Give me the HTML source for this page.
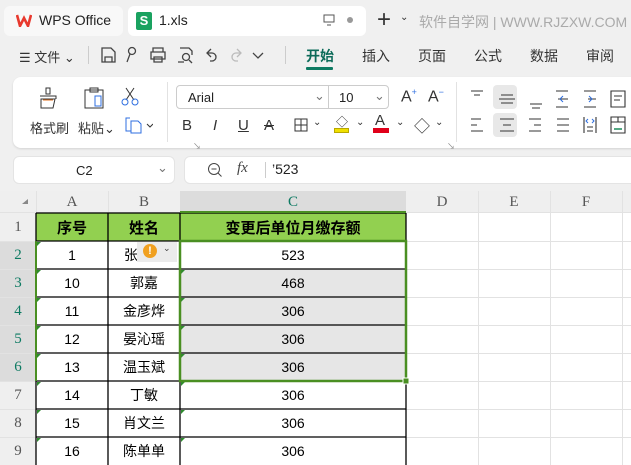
<!DOCTYPE html>
<html><head><meta charset="utf-8"><style>
*{margin:0;padding:0;box-sizing:border-box}
body{width:631px;height:465px;overflow:hidden;background:#f0f0f0;font-family:"Liberation Sans","Noto Sans CJK SC",sans-serif;position:relative;color:#222}
.a{position:absolute}
.t{font-size:13px;color:#333;white-space:nowrap}
.cell{position:absolute;display:flex;align-items:center;justify-content:center;font-size:14px;color:#000}
.rh{position:absolute;left:0;width:36px;display:flex;align-items:center;justify-content:center;font-family:"Liberation Serif",serif;font-size:15px;color:#555}
.ch{position:absolute;top:191px;height:22px;display:flex;align-items:center;justify-content:center;font-family:"Liberation Serif",serif;font-size:15px;color:#555}
</style></head><body>
<!-- tabs -->
<div class="a" style="left:4px;top:6px;width:119px;height:30px;background:#f8f8f8;border-radius:6px"></div>
<svg class="a" style="left:16px;top:14px" width="16" height="13" viewBox="0 0 16 13"><path d="M1 1 L4 12 L8 4 L12 12 L15 1" stroke="#e8392e" stroke-width="2.6" fill="none"/></svg>
<div class="a t" style="left:39px;top:12px;font-size:14px;color:#222">WPS Office</div>
<div class="a" style="left:128px;top:6px;width:238px;height:30px;background:#fff;border-radius:6px"></div>
<div class="a" style="left:136px;top:12px;width:16px;height:18px;background:#1aa260;border-radius:2px;color:#fff;font-size:13px;font-weight:bold;text-align:center;line-height:18px">S</div>
<div class="a t" style="left:159px;top:12px;font-size:14px;color:#222">1.xls</div>
<svg class="a" style="left:323px;top:14px" width="12" height="12"><rect x="1" y="1" width="10" height="7" stroke="#555" fill="none"/><path d="M4 11h4" stroke="#555"/></svg>
<div class="a" style="left:347px;top:17px;width:6px;height:6px;border-radius:3px;background:#999"></div>
<div class="a" style="left:377px;top:6px;font-size:24px;color:#333;font-weight:300">+</div>
<div class="a t" style="left:400px;top:12px;font-size:10px">⌄</div>
<div class="a t" style="left:419px;top:12px;font-size:14px;color:#aaa">软件自学网 | WWW.RJZXW.COM</div>
<!-- menu -->
<div class="a t" style="left:19px;top:47px;font-size:13px">☰ 文件 ⌄</div>
<div class="a" style="left:88px;top:46px;width:1px;height:18px;background:#ccc"></div>
<svg class="a" style="left:100px;top:45px" width="175" height="20" fill="none" stroke="#444" stroke-width="1.3">
<path d="M2 3h9l4 4v10H2zM5 17v-5h7v5"/>
<circle cx="32" cy="6" r="3.5"/><path d="M30 9l-3 8"/>
<path d="M53 7V3h10v4M51 7h14v7H51zM54 12h8v5h-8z"/>
<path d="M80 3h9l3 3v4M78 17h6"/><circle cx="86" cy="12" r="3.5"/><path d="M89 15l3 3"/>
<path d="M111 4l-4 4 4 4M107 8h5a4 4 0 0 1 0 8h-2"/>
<path d="M137 4l4 4-4 4M141 8h-5a4 4 0 0 0 0 8h2" stroke="#bbb"/>
<path d="M153 8l5 5 5-5"/>
</svg>
<div class="a" style="left:285px;top:46px;width:1px;height:18px;background:#ccc"></div>
<div class="a t" style="left:306px;top:46px;font-size:14px;color:#0d6b5a;font-weight:bold">开始</div>
<div class="a" style="left:306px;top:67px;width:27px;height:3px;background:#0d7a62;border-radius:1px"></div>
<div class="a t" style="left:362px;top:46px;font-size:14px">插入</div>
<div class="a t" style="left:418px;top:46px;font-size:14px">页面</div>
<div class="a t" style="left:474px;top:46px;font-size:14px">公式</div>
<div class="a t" style="left:530px;top:46px;font-size:14px">数据</div>
<div class="a t" style="left:586px;top:46px;font-size:14px">审阅</div>
<!-- ribbon -->
<div class="a" style="left:13px;top:77px;width:640px;height:71px;background:#fff;border-radius:8px;box-shadow:0 1px 2px rgba(0,0,0,.12)"></div>
<svg class="a" style="left:36px;top:86px" width="24" height="24" viewBox="0 0 24 24"><path d="M10 2h4v6h-4z M4 10h16v3 M5 13h14l-2 9H5z" stroke="#333" fill="none"/><path d="M7 14h10" stroke="#e07020"/></svg>
<svg class="a" style="left:82px;top:86px" width="24" height="24" viewBox="0 0 24 24"><path d="M3 4h18v18H3z M8 2h8v4H8z" stroke="#333" fill="none"/><rect x="13" y="10" width="6" height="10" stroke="#2f6fe0" fill="none"/></svg>
<svg class="a" style="left:121px;top:87px" width="18" height="20"><path d="M5 1l8 12M13 1L5 13" stroke="#333" fill="none"/><circle cx="4" cy="15" r="3" stroke="#2f6fe0" fill="none"/><circle cx="14" cy="15" r="3" stroke="#2f6fe0" fill="none"/></svg>
<div class="a t" style="left:30px;top:118px">格式刷</div>
<div class="a t" style="left:78px;top:118px">粘贴⌄</div>
<svg class="a" style="left:125px;top:116px" width="28" height="18"><path d="M5 2H1v13h5 M6 5h7l3 3v9H6z" stroke="#2f6fe0" fill="none"/><path d="M22 8l3 3 3-3" stroke="#333" fill="none"/></svg>
<div class="a" style="left:193px;top:141px;font-size:8px;color:#888">↘</div>
<div class="a" style="left:167px;top:82px;width:1px;height:60px;background:#e2e2e2"></div>
<div class="a" style="left:176px;top:85px;width:213px;height:24px;border:1px solid #ccc;border-radius:4px"></div>
<div class="a" style="left:328px;top:86px;width:1px;height:22px;background:#ccc"></div>
<div class="a t" style="left:188px;top:90px;font-size:13px;color:#222">Arial</div>
<div class="a t" style="left:314px;top:88px;color:#777">⌄</div>
<div class="a t" style="left:339px;top:90px;font-size:13px;color:#222">10</div>
<div class="a t" style="left:374px;top:88px;color:#777">⌄</div>
<div class="a t" style="left:401px;top:87px;font-size:16px">A<sup style="font-size:9px;color:#2f6fe0">+</sup></div>
<div class="a t" style="left:428px;top:87px;font-size:16px">A<sup style="font-size:9px;color:#2f6fe0">−</sup></div>
<div class="a t" style="left:182px;top:117px;font-size:15px">B</div>
<div class="a t" style="left:213px;top:117px;font-size:15px;font-style:italic">I</div>
<div class="a t" style="left:238px;top:117px;font-size:15px;text-decoration:underline">U</div>
<div class="a t" style="left:264px;top:117px;font-size:15px;text-decoration:line-through">A</div>
<svg class="a" style="left:294px;top:118px" width="14" height="14"><path d="M1 1h12v12H1zM7 1v12M1 7h12" stroke="#333" fill="none"/></svg>
<div class="a t" style="left:313px;top:117px;font-size:10px">⌄</div>
<div class="a" style="left:334px;top:128px;width:15px;height:5px;background:#f0e000;border:1px solid #b9a800"></div>
<div class="a t" style="left:336px;top:113px;font-size:12px">◇</div>
<div class="a t" style="left:356px;top:117px;font-size:10px">⌄</div>
<div class="a t" style="left:375px;top:112px;font-size:15px">A</div>
<div class="a" style="left:373px;top:128px;width:16px;height:5px;background:#e0001a"></div>
<div class="a t" style="left:396px;top:117px;font-size:10px">⌄</div>
<div class="a t" style="left:414px;top:113px;font-size:16px">◇</div>
<div class="a t" style="left:435px;top:117px;font-size:10px">⌄</div>
<div class="a" style="left:447px;top:141px;font-size:8px;color:#888">↘</div>
<div class="a" style="left:456px;top:82px;width:1px;height:60px;background:#e2e2e2"></div>
<div class="a" style="left:493px;top:85px;width:24px;height:24px;background:#e8e8e8;border-radius:4px"></div>
<div class="a" style="left:493px;top:113px;width:24px;height:24px;background:#e8e8e8;border-radius:4px"></div>
<svg class="a" style="left:468px;top:88px" width="163" height="48" fill="none">
<g stroke="#333" stroke-width="1.1"><path d="M3 3h12M6 7h6"/><path d="M33 7h12M31 11h16M33 15h12"/><path d="M62 16h12M64 20h8"/><path d="M88 3h12M90 11h10M88 19h12"/><path d="M116 3h12M120 11h8M116 19h12"/><path d="M143 3h14v16h-14zM146 8h8M146 12h6"/>
<path d="M3 31h10M3 37h6M3 43h12"/><path d="M32 31h14M35 37h8M32 43h14"/><path d="M61 31h12M66 37h7M61 43h12"/><path d="M89 31h12M89 37h12M89 43h12"/><path d="M116 29v16M128 29v16M119 39h6M119 43h6"/><path d="M143 29h14v16h-14zM143 34h14M150 29v5"/></g>
<g stroke="#2f6fe0"><path d="M92 11l3-3M92 11l3 3"/><path d="M124 11l-3-3M124 11l-3 3"/><path d="M120 31l-2 2 2 2M124 31l2 2-2 2"/></g>
<path d="M146 41h8" stroke="#1a8a5a" stroke-width="1.5"/>
</svg>
<!-- formula bar -->
<div class="a" style="left:13px;top:156px;width:162px;height:28px;background:#fff;border-radius:6px;border:1px solid #e4e4e4"></div>
<div class="a t" style="left:76px;top:163px;font-size:13px;color:#222">C2</div>
<div class="a t" style="left:157px;top:160px;color:#777">⌄</div>
<div class="a" style="left:184px;top:156px;width:460px;height:28px;background:#fff;border-radius:6px;border:1px solid #e4e4e4"></div>
<svg class="a" style="left:207px;top:162px" width="16" height="16"><circle cx="7" cy="7" r="5.5" stroke="#444" fill="none"/><path d="M4.5 7h5M11 11l3.5 3.5" stroke="#444"/></svg>
<div class="a" style="left:237px;top:160px;font-size:15px;font-style:italic;font-family:'Liberation Serif',serif;color:#444">fx</div>
<div class="a" style="left:265px;top:162px;width:1px;height:16px;background:#ccc"></div>
<div class="a t" style="left:272px;top:161px;font-size:14px;color:#222">’523</div>
<!-- grid background -->
<div class="a" style="left:0;top:191px;width:631px;height:22px;background:#efefef"></div>
<div class="a" style="left:180px;top:191px;width:226px;height:22px;background:#dcdcdc"></div>
<div class="a" style="left:0;top:213px;width:36px;height:252px;background:#efefef"></div>
<div class="a" style="left:0;top:241px;width:36px;height:140px;background:#dcdcdc"></div>
<div class="a" style="left:36px;top:213px;width:595px;height:252px;background:#fff"></div>
<svg class="a" style="left:0;top:191px" width="631" height="274">
<g stroke="#e2e2e2">
<path d="M478.5 0v274M550.5 0v274M622.5 0v274M108.5 0v22M36.5 0v22"/>
<path d="M406 50.5h225M406 78.5h225M406 106.5h225M406 134.5h225M406 162.5h225M406 190.5h225M406 218.5h225M406 246.5h225"/>
<path d="M0 50.5h36M0 78.5h36M0 106.5h36M0 134.5h36M0 162.5h36M0 190.5h36M0 218.5h36M0 246.5h36M0 21.5h631"/>
</g>
<path d="M22 13l6-5v5z" fill="#888"/>
</svg>
<div class="ch" style="left:36px;width:72px">A</div>
<div class="ch" style="left:108px;width:72px">B</div>
<div class="ch" style="left:180px;width:226px;color:#0d7a62">C</div>
<div class="ch" style="left:406px;width:72px">D</div>
<div class="ch" style="left:478px;width:72px">E</div>
<div class="ch" style="left:550px;width:72px">F</div>
<div class="rh" style="top:213px;height:28px">1</div>
<div class="rh" style="top:241px;height:28px;color:#0d7a62">2</div>
<div class="rh" style="top:269px;height:28px;color:#0d7a62">3</div>
<div class="rh" style="top:297px;height:28px;color:#0d7a62">4</div>
<div class="rh" style="top:325px;height:28px;color:#0d7a62">5</div>
<div class="rh" style="top:353px;height:28px;color:#0d7a62">6</div>
<div class="rh" style="top:381px;height:28px">7</div>
<div class="rh" style="top:409px;height:28px">8</div>
<div class="rh" style="top:437px;height:28px">9</div>
<!-- header row -->
<div class="a" style="left:36px;top:213px;width:370px;height:28px;background:#92d050"></div>
<div class="a" style="left:180px;top:269px;width:226px;height:112px;background:#e6e6e6"></div>
<svg class="a" style="left:0;top:191px" width="631" height="274">
<g stroke="#000" stroke-width="1.3">
<path d="M36 22h370M36 50h370M36 78h370M36 106h370M36 134h370M36 162h370M36 190h370M36 218h370M36 246h370"/>
<path d="M36 22v252M108 22v252M180 22v252M406 22v252"/>
</g>
</svg>
<div class="cell" style="left:36px;top:213px;width:72px;height:28px;font-weight:bold;font-size:15px">序号</div>
<div class="cell" style="left:108px;top:213px;width:72px;height:28px;font-weight:bold;font-size:15px">姓名</div>
<div class="cell" style="left:180px;top:213px;width:226px;height:28px;font-weight:bold;font-size:15px">变更后单位月缴存额</div>
<div class="cell" style="left:36px;top:241px;width:72px;height:28px">1</div><div class="cell" style="left:108px;top:241px;width:72px;height:28px;justify-content:flex-start;padding-left:16px">张总宇</div><div class="cell" style="left:180px;top:241px;width:226px;height:28px">523</div>
<div class="cell" style="left:36px;top:269px;width:72px;height:28px">10</div><div class="cell" style="left:108px;top:269px;width:72px;height:28px">郭嘉</div><div class="cell" style="left:180px;top:269px;width:226px;height:28px">468</div>
<div class="cell" style="left:36px;top:297px;width:72px;height:28px">11</div><div class="cell" style="left:108px;top:297px;width:72px;height:28px">金彦烨</div><div class="cell" style="left:180px;top:297px;width:226px;height:28px">306</div>
<div class="cell" style="left:36px;top:325px;width:72px;height:28px">12</div><div class="cell" style="left:108px;top:325px;width:72px;height:28px">晏沁瑶</div><div class="cell" style="left:180px;top:325px;width:226px;height:28px">306</div>
<div class="cell" style="left:36px;top:353px;width:72px;height:28px">13</div><div class="cell" style="left:108px;top:353px;width:72px;height:28px">温玉斌</div><div class="cell" style="left:180px;top:353px;width:226px;height:28px">306</div>
<div class="cell" style="left:36px;top:381px;width:72px;height:28px">14</div><div class="cell" style="left:108px;top:381px;width:72px;height:28px">丁敏</div><div class="cell" style="left:180px;top:381px;width:226px;height:28px">306</div>
<div class="cell" style="left:36px;top:409px;width:72px;height:28px">15</div><div class="cell" style="left:108px;top:409px;width:72px;height:28px">肖文兰</div><div class="cell" style="left:180px;top:409px;width:226px;height:28px">306</div>
<div class="cell" style="left:36px;top:437px;width:72px;height:28px">16</div><div class="cell" style="left:108px;top:437px;width:72px;height:28px">陈单单</div><div class="cell" style="left:180px;top:437px;width:226px;height:28px">306</div>
<!-- error-check popup -->
<div class="a" style="left:137px;top:242px;width:40px;height:20px;background:#ebebeb"></div>
<div class="a" style="left:143px;top:244px;width:14px;height:14px;border-radius:7px;background:#f0a020;color:#fff;font-size:11px;font-weight:bold;text-align:center;line-height:14px">!</div>
<div class="a" style="left:163px;top:243px;font-size:9px;color:#444">⌄</div>
<!-- green triangles -->
<svg class="a" style="left:0;top:0" width="631" height="465">
<g fill="#2e8b2e">
<path d="M37 242h4l-4 4z"/><path d="M37 270h4l-4 4z"/><path d="M37 298h4l-4 4z"/><path d="M37 326h4l-4 4z"/><path d="M37 354h4l-4 4z"/><path d="M37 382h4l-4 4z"/><path d="M37 410h4l-4 4z"/><path d="M37 438h4l-4 4z"/>
<path d="M181 270h4l-4 4z"/><path d="M181 298h4l-4 4z"/><path d="M181 326h4l-4 4z"/><path d="M181 354h4l-4 4z"/><path d="M181 382h4l-4 4z"/><path d="M181 410h4l-4 4z"/><path d="M181 438h4l-4 4z"/>
</g>
<rect x="180" y="241" width="226" height="140" fill="none" stroke="#4a8f22" stroke-width="2.5"/>
<path d="M36 241v140" stroke="#4a8f22" stroke-width="2"/>
<path d="M180 212h226" stroke="#4a8f22" stroke-width="2"/>
<rect x="403" y="378" width="6" height="6" fill="#4a8f22" stroke="#fff"/>
</svg>
</body></html>
